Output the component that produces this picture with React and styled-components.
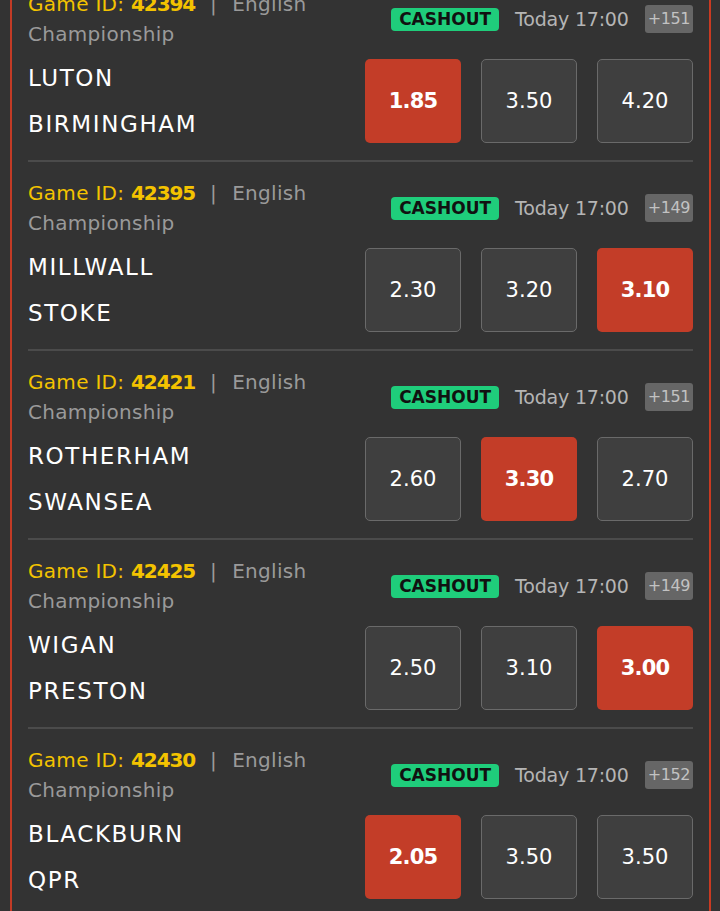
import React from "react";
import styled, { createGlobalStyle } from "styled-components";

const Global = createGlobalStyle`
  html, body { margin: 0; padding: 0; background: #333333; }
  body { font-family: "DejaVu Sans", "Liberation Sans", sans-serif; overflow: hidden; }
`;

const Frame = styled.div`
  margin: -27px 9px 0 10px;
  border-left: 2px solid #c23b26;
  border-right: 2px solid #c93a22;
  background: #333333;
  padding: 0 16px;
  min-height: 1200px;
`;

const Row = styled.div`
  padding: 16px 0 13px;
  border-bottom: 2px solid #4b4b4b;
`;

const Header = styled.div`
  display: flex;
  align-items: center;
  gap: 12px;
`;

const Meta = styled.div`
  flex: 1;
  min-width: 0;
  font-size: 20px;
  line-height: 30px;
  letter-spacing: 0.3px;
  color: #9a9a9a;
`;

const GameId = styled.span`
  color: #f4c300;
`;

const IdNum = styled.b`
  font-weight: 700;
  letter-spacing: -1.1px;
`;

const Sep = styled.span`
  margin: 0 15px;
  color: #9a9a9a;
`;

const Info = styled.div`
  display: flex;
  align-items: center;
  gap: 16px;
  flex: none;
`;

const Cashout = styled.span`
  background: #1fcd7b;
  color: #111;
  font-weight: 700;
  font-size: 17px;
  line-height: 23px;
  height: 23px;
  padding: 0 8px;
  border-radius: 4px;
`;

const Time = styled.span`
  color: #b5b5b5;
  font-size: 19px;
  letter-spacing: -0.2px;
`;

const More = styled.span`
  background: #666666;
  color: #c2c2c2;
  font-size: 16px;
  height: 28px;
  line-height: 28px;
  padding: 0 3px;
  letter-spacing: -0.4px;
  border-radius: 3px;
`;

const Body = styled.div`
  display: flex;
  align-items: center;
  justify-content: space-between;
  margin-top: 6px;
`;

const Teams = styled.div`
  display: flex;
  flex-direction: column;
  color: #ffffff;
  font-size: 23px;
  line-height: 46px;
  letter-spacing: 1.6px;
`;

const Odds = styled.div`
  display: flex;
  gap: 20px;
`;

const Odd = styled.div`
  width: 96px;
  height: 84px;
  box-sizing: border-box;
  display: flex;
  align-items: center;
  justify-content: center;
  border-radius: 5px;
  font-size: 21px;
  background: ${(p) => (p.$active ? "#c33d28" : "#3f3f3f")};
  border: ${(p) => (p.$active ? "none" : "1.5px solid #6a6a6a")};
  color: #ffffff;
  font-weight: ${(p) => (p.$active ? 700 : 400)};
  letter-spacing: ${(p) => (p.$active ? "-0.8px" : "0")};
`;

const games = [
  { id: "42394", more: "+151", teams: ["LUTON", "BIRMINGHAM"], odds: ["1.85", "3.50", "4.20"], sel: 0 },
  { id: "42395", more: "+149", teams: ["MILLWALL", "STOKE"], odds: ["2.30", "3.20", "3.10"], sel: 2 },
  { id: "42421", more: "+151", teams: ["ROTHERHAM", "SWANSEA"], odds: ["2.60", "3.30", "2.70"], sel: 1 },
  { id: "42425", more: "+149", teams: ["WIGAN", "PRESTON"], odds: ["2.50", "3.10", "3.00"], sel: 2 },
  { id: "42430", more: "+152", teams: ["BLACKBURN", "QPR"], odds: ["2.05", "3.50", "3.50"], sel: 0 },
];

export default function App() {
  return (
    <>
      <Global />
      <Frame>
        {games.map((g) => (
          <Row key={g.id}>
            <Header>
              <Meta>
                <GameId>
                  Game ID: <IdNum>{g.id}</IdNum>
                </GameId>
                <Sep>|</Sep>
                English Championship
              </Meta>
              <Info>
                <Cashout>CASHOUT</Cashout>
                <Time>Today 17:00</Time>
                <More>{g.more}</More>
              </Info>
            </Header>
            <Body>
              <Teams>
                {g.teams.map((t) => (
                  <span key={t}>{t}</span>
                ))}
              </Teams>
              <Odds>
                {g.odds.map((o, i) => (
                  <Odd key={i} $active={i === g.sel}>
                    {o}
                  </Odd>
                ))}
              </Odds>
            </Body>
          </Row>
        ))}
      </Frame>
    </>
  );
}
